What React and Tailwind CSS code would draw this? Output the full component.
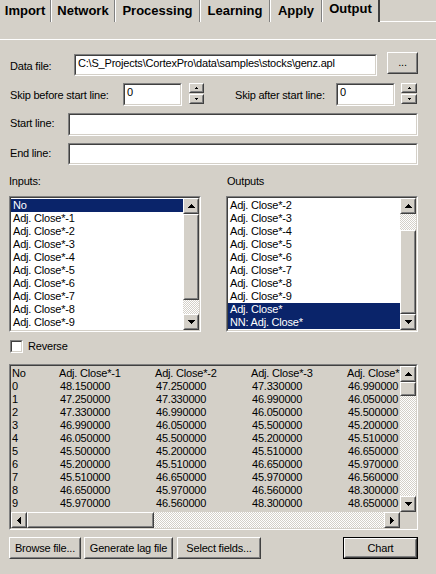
import React from 'react';

const arrows = {
  up: { w: 7, h: 4, d: 'M3 0h1v1h1v1h1v1h1v1H0V3h1V2h1V1h1z' },
  down: { w: 7, h: 4, d: 'M0 0h7v1H6v1H5v1H4v1H3V3H2V2H1V1H0z' },
  left: { w: 4, h: 7, d: 'M3 0h1v7H3V6H2V5H1V4H0V3h1V2h1V1h1z' },
  right: { w: 4, h: 7, d: 'M0 0h1v1h1v1h1v1h1v1H3v1H2v1H1v1H0z' },
  spinUp: { w: 3, h: 2, d: 'M1 0h1v1h1v1H0V1h1z' },
  spinDown: { w: 3, h: 2, d: 'M0 0h3v1H2v1H1V1H0z' },
};

const Arrow = ({ dir }) => {
  const a = arrows[dir];
  return (
    <svg width={a.w} height={a.h} viewBox={`0 0 ${a.w} ${a.h}`} shapeRendering="crispEdges">
      <path d={a.d} fill="#000" />
    </svg>
  );
};

const hatch = 'bg-[image:repeating-conic-gradient(#ffffff_0_25%,#d4d0c8_0_50%)] bg-[length:2px_2px]';

// classic 3d frames
const Sunken = ({ className = '', innerClassName = '', children }) => (
  <div className={`border border-t-[#808080] border-l-[#808080] border-b-white border-r-white ${className}`}>
    <div className={`h-full w-full border border-t-[#404040] border-l-[#404040] border-b-[#d4d0c8] border-r-[#d4d0c8] ${innerClassName}`}>
      {children}
    </div>
  </div>
);

const Raised = ({ className = '', children }) => (
  <div className={`shrink-0 border border-t-white border-l-white border-b-[#404040] border-r-[#404040] bg-[#d4d0c8] ${className}`}>
    <div className="h-full w-full border border-t-[#d4d0c8] border-l-[#d4d0c8] border-b-[#808080] border-r-[#808080] flex items-center justify-center">
      {children}
    </div>
  </div>
);

const ScrollBtn = ({ dir }) => (
  <Raised className="w-[16px] h-[16px]">
    <Arrow dir={dir} />
  </Raised>
);

const VScroll = ({ before, thumb }) => (
  <div className="w-[16px] shrink-0 flex flex-col">
    <ScrollBtn dir="up" />
    <div className={`flex-1 flex flex-col ${hatch}`}>
      <div className={before} />
      <Raised className={`w-[16px] ${thumb}`} />
    </div>
    <ScrollBtn dir="down" />
  </div>
);

const Spinner = ({ className = '' }) => (
  <div className={`flex flex-col gap-px ${className}`}>
    <Raised className="w-full h-[10px]">
      <Arrow dir="spinUp" />
    </Raised>
    <Raised className="w-full h-[10px]">
      <Arrow dir="spinDown" />
    </Raised>
  </div>
);

const Field = ({ className = '', value = '' }) => (
  <Sunken className={className} innerClassName="bg-white pl-[2px] pt-px leading-[13px] whitespace-nowrap overflow-hidden">
    {value}
  </Sunken>
);

const ListBox = ({ items, selected, before, thumb }) => (
  <Sunken className="w-[192px] h-[136px]" innerClassName="bg-white flex">
    <div className="flex-1 pt-px overflow-hidden">
      {items.map((it, i) => (
        <div
          key={i}
          className={`h-[13px] leading-[13px] pl-[2px] whitespace-nowrap ${selected.includes(i) ? 'bg-[#0a246a] text-white' : ''}`}
        >
          {it}
        </div>
      ))}
    </div>
    <VScroll before={before} thumb={thumb} />
  </Sunken>
);

const tabs = [
  { label: 'Import', w: 'w-[51px] border-l-0' },
  { label: 'Network', w: 'w-[64px]' },
  { label: 'Processing', w: 'w-[85px]' },
  { label: 'Learning', w: 'w-[70px]' },
  { label: 'Apply', w: 'w-[52px]' },
];

const inputs = ['No', ...Array.from({ length: 9 }, (_, i) => `Adj. Close*-${i + 1}`)];
const outputs = [...Array.from({ length: 8 }, (_, i) => `Adj. Close*-${i + 2}`), 'Adj. Close*', 'NN: Adj. Close*'];

const seq = [48.15, 47.25, 47.33, 46.99, 46.05, 45.5, 45.2, 45.51, 46.65, 45.97, 46.56, 48.3, 48.65];
const gridRows = Array.from({ length: 10 }, (_, i) => [0, 1, 2, 3].map((j) => seq[i + j].toFixed(6)));

export default function App() {
  return (
    <div className="w-[436px] h-[574px] overflow-hidden bg-[#d4d0c8] text-black font-['Liberation_Sans',Arial,sans-serif] text-[11px] tracking-[-0.2px]">
      {/* Tabs */}
      <div className="flex h-[22px] font-bold text-[13px] tracking-normal">
        {tabs.map((t) => (
          <div
            key={t.label}
            className={`${t.w} h-full flex justify-center pt-[3px] leading-[15px] border-l border-l-white border-r border-r-[#808080]`}
          >
            {t.label}
          </div>
        ))}
        <div className="w-[58px] h-full flex justify-center pt-px leading-[15px] border-l border-l-white border-r-2 border-r-[#404040]">
          Output
        </div>
        <div className="flex-1 h-full border-b border-b-white" />
      </div>

      <div className="h-[17px]" />

      {/* Body */}
      <div className="border-t border-t-white pt-[12px] pl-[9px] pr-[18px]">
        {/* Data file */}
        <div className="flex items-start h-[24px]">
          <div className="ml-px w-[64px] pt-[8px] leading-[13px]">Data file:</div>
          <Field className="w-[303px] h-[22px] mt-[2px]" value="C:\S_Projects\CortexPro\data\samples\stocks\genz.apl" />
          <Raised className="ml-[10px] w-[31px] h-[22px]">
            <span className="leading-[13px] -mt-[2px]">...</span>
          </Raised>
        </div>

        {/* Skip */}
        <div className="flex items-start h-[23px] mt-[7px]">
          <div className="ml-px w-[113px] pt-[6px] leading-[13px] whitespace-nowrap">Skip before start line:</div>
          <Field className="w-[59px] h-[23px]" value="0" />
          <Spinner className="ml-[7px] w-[15px]" />
          <div className="ml-[31px] w-[101px] pt-[6px] leading-[13px] whitespace-nowrap">Skip after start line:</div>
          <Field className="w-[59px] h-[23px]" value="0" />
          <Spinner className="ml-[6px] w-[16px]" />
        </div>

        {/* Start line */}
        <div className="flex items-start h-[23px] mt-[7px]">
          <div className="ml-px w-[58px] pt-[4px] leading-[13px]">Start line:</div>
          <Field className="w-[350px] h-[23px]" />
        </div>

        {/* End line */}
        <div className="flex items-start h-[22px] mt-[7px]">
          <div className="ml-px w-[58px] pt-[4px] leading-[13px]">End line:</div>
          <Field className="w-[350px] h-[22px]" />
        </div>

        {/* Lists */}
        <div className="flex mt-[10px] h-[13px] leading-[13px]">
          <div className="w-[218px]">Inputs:</div>
          <div>Outputs</div>
        </div>
        <div className="flex mt-[8px]">
          <ListBox items={inputs} selected={[0]} before="h-0" thumb="h-[86px]" />
          <div className="ml-[25px]">
            <ListBox items={outputs} selected={[8, 9]} before="h-[16px]" thumb="h-[84px]" />
          </div>
        </div>

        {/* Reverse */}
        <div className="flex items-start mt-[8px] h-[13px]">
          <Sunken className="ml-px w-[13px] h-[13px]" innerClassName="bg-white" />
          <div className="ml-[5px] leading-[13px]">Reverse</div>
        </div>

        {/* Grid */}
        <Sunken className="mt-[11px] w-[409px] h-[166px]" innerClassName="flex flex-col">
          <div className="flex h-[146px]">
            <div className="flex-1 overflow-hidden pt-px pl-px">
              <div className="flex h-[13px] leading-[13px] whitespace-nowrap">
                <div className="w-[47px] shrink-0">No</div>
                <div className="w-[96px] shrink-0">Adj. Close*-1</div>
                <div className="w-[96px] shrink-0">Adj. Close*-2</div>
                <div className="w-[96px] shrink-0">Adj. Close*-3</div>
                <div className="shrink-0">Adj. Close*</div>
              </div>
              {gridRows.map((r, i) => (
                <div key={i} className="flex h-[13px] leading-[13px] whitespace-nowrap">
                  <div className="w-[47px] shrink-0">{i}</div>
                  {r.map((v, j) => (
                    <div key={j} className="w-[96px] shrink-0 pl-px">{v}</div>
                  ))}
                </div>
              ))}
            </div>
            <VScroll before="h-0" thumb="h-[14px]" />
          </div>
          <div className="flex h-[16px]">
            <div className="flex-1 flex">
              <ScrollBtn dir="left" />
              <Raised className="w-[127px] h-[16px]" />
              <div className={`flex-1 ${hatch}`} />
              <ScrollBtn dir="right" />
            </div>
            <div className="w-[16px]" />
          </div>
        </Sunken>

        {/* Buttons */}
        <div className="flex mt-[7px] h-[22px] leading-[13px]">
          <Raised className="w-[72px] h-[22px]">Browse file...</Raised>
          <Raised className="ml-[3px] w-[89px] h-[22px]">Generate lag file</Raised>
          <Raised className="ml-[4px] w-[84px] h-[22px]">Select fields...</Raised>
          <div className="ml-auto w-[75px] h-[22px] border border-black">
            <Raised className="w-full h-full">Chart</Raised>
          </div>
        </div>
      </div>
    </div>
  );
}
